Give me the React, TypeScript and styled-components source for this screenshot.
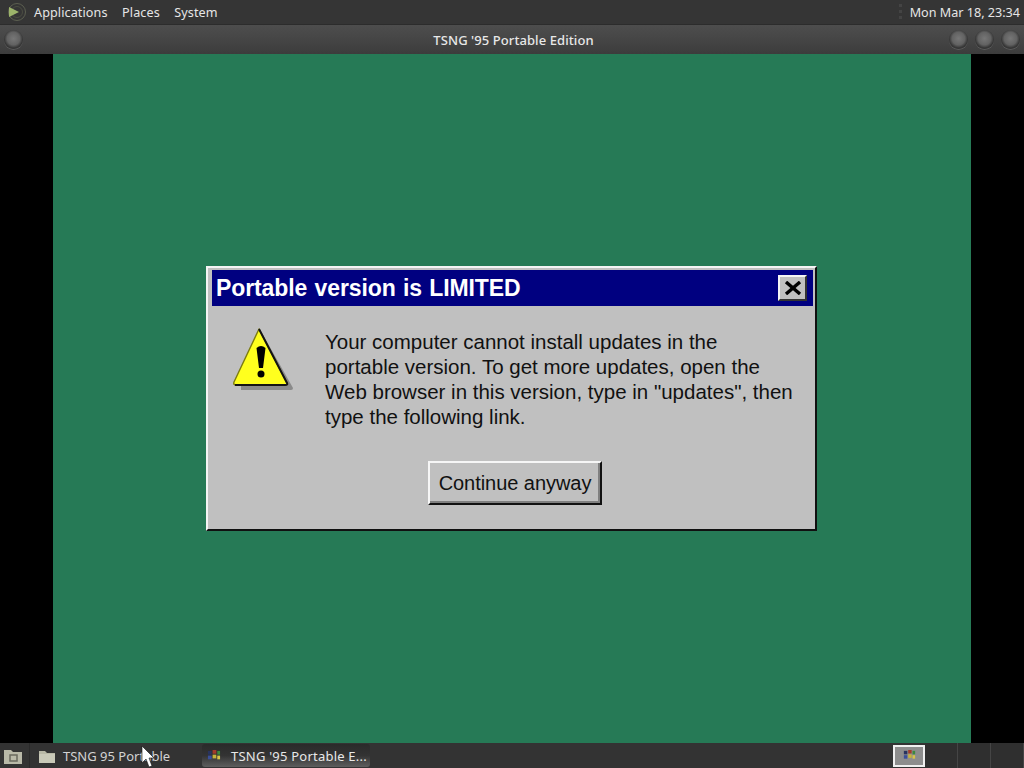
import { createGlobalStyle } from "styled-components";
import styled from "styled-components";

const GlobalStyle = createGlobalStyle`
  html, body {
    margin: 0;
    padding: 0;
    background: #000;
  }
  body {
    font-family: "Noto Sans", "Liberation Sans", sans-serif;
  }
`;

const Screen = styled.div`
  position: relative;
  width: 1024px;
  height: 768px;
  display: flex;
  flex-direction: column;
  overflow: hidden;
`;

const TopPanel = styled.div`
  height: 24px;
  display: flex;
  align-items: center;
  background: #353535;
  color: #e6e6e6;
  font-size: 12.6px;
  padding: 0 4px 0 7px;
`;

const MenuBar = styled.div`
  display: flex;
  gap: 14.5px;
  margin-left: 7px;
  letter-spacing: 0.1px;
`;

const Clock = styled.div`
  letter-spacing: 0;
`;

const Grip = styled.div`
  width: 3px;
  height: 16px;
  margin-right: 8px;
  margin-left: auto;
  background: repeating-linear-gradient(#444 0 3px, transparent 3px 6px);
`;

const TitleBar = styled.div`
  height: 30px;
  display: flex;
  align-items: center;
  padding: 0 4px 0 4px;
  color: #e8e8e8;
  font-size: 13px;
  font-weight: 500;
  background: linear-gradient(#4d4d4d 0, #474747 40%, #3c3c3c 100%);
  border-top: 1px solid #2c2c2c;
  box-sizing: border-box;
`;

const TitleText = styled.div`
  flex: 1;
  text-align: center;
  padding-left: 55px;
  letter-spacing: 0.08px;
`;

const WindowButtons = styled.div`
  display: flex;
  gap: 7px;
`;

const RoundButton = styled.div`
  width: 19px;
  height: 19px;
  border-radius: 50%;
  box-sizing: border-box;
  background: radial-gradient(circle at 50% 45%, #777 0, #626262 45%, #383838 65%, #2b2b2b 100%);
  box-shadow: 0 1px 0 #5a5a5a;
`;

const Desktop = styled.div`
  flex: 1;
  display: flex;
  background: #000;
  padding: 0 53px;
`;

const Stage = styled.div`
  flex: 1;
  display: flex;
  align-items: center;
  justify-content: center;
  background: #267a56;
  padding-right: 1px;
`;

const Dialog = styled.div`
  width: 611px;
  height: 265px;
  box-sizing: border-box;
  background: #c0c0c0;
  border: 2px solid;
  border-color: #f4f4f4 #101010 #101010 #f4f4f4;
  padding: 2px 2px 0 4px;
  display: flex;
  flex-direction: column;
  font-family: "Liberation Sans", Arial, sans-serif;
`;

const DialogTitle = styled.div`
  height: 36px;
  flex: none;
  display: flex;
  align-items: center;
  justify-content: space-between;
  background: #000080;
  padding: 0 6px 0 4px;
  color: #fff;
  font-size: 23px;
  font-weight: 700;
  letter-spacing: -0.1px;
  word-spacing: 1px;
`;

const CloseButton = styled.div`
  width: 29px;
  height: 26px;
  box-sizing: border-box;
  display: flex;
  align-items: center;
  justify-content: center;
  background: #c0c0c0;
  border: 2px solid;
  border-color: #f4f4f4 #333 #333 #f4f4f4;
`;

const DialogBody = styled.div`
  flex: 1;
  display: flex;
  padding: 22px 12px 0 21px;
`;

const WarningIcon = styled.div`
  width: 60px;
  height: 62px;
  flex: none;
  margin-right: 32px;
`;

const Message = styled.div`
  color: #111;
  font-size: 20.5px;
  line-height: 25px;
  white-space: pre;
  padding-top: 1px;
  letter-spacing: 0;
`;

const ButtonRow = styled.div`
  height: 68px;
  flex: none;
  display: flex;
  justify-content: center;
  padding-left: 5px;
`;

const ContinueButton = styled.div`
  width: 174px;
  height: 44px;
  box-sizing: border-box;
  display: flex;
  align-items: center;
  justify-content: center;
  background: #c0c0c0;
  border: 2px solid;
  border-color: #f6f6f6 #111 #111 #f6f6f6;
  box-shadow: inset -2px -2px 0 #808080;
  color: #111;
  font-size: 20px;
  letter-spacing: -0.05px;
`;

const BottomPanel = styled.div`
  height: 25px;
  display: flex;
  align-items: center;
  background: #333;
  color: #dcdcdc;
  font-size: 13px;
`;

const ShowDesktop = styled.div`
  width: 30px;
  height: 25px;
  flex: none;
  display: flex;
  align-items: center;
  padding-left: 3px;
  box-sizing: border-box;
  border-right: 1px solid #2a2a2a;
`;

const Task = styled.div<{ $active?: boolean }>`
  height: 23px;
  width: ${(p) => (p.$active ? "168px" : "172px")};
  box-sizing: border-box;
  display: flex;
  align-items: center;
  gap: ${(p) => (p.$active ? "10px" : "7px")};
  padding-left: ${(p) => (p.$active ? "5px" : "8px")};
  border-radius: 3px;
  letter-spacing: ${(p) => (p.$active ? "0.22px" : "0")};
  color: ${(p) => (p.$active ? "#e8e8e8" : "#d4d4d4")};
  background: ${(p) =>
    p.$active ? "linear-gradient(#2a2a2a 0, #333 50%, #5e5e5e 100%)" : "transparent"};
`;

const Tray = styled.div`
  margin-left: auto;
  display: flex;
  height: 25px;
  align-items: center;
`;

const TrayThumb = styled.div`
  width: 32px;
  height: 22px;
  box-sizing: border-box;
  border: 2px solid #f0f0f0;
  background: #8d8d8d;
  display: flex;
  align-items: center;
  justify-content: center;
`;

const Workspace = styled.div`
  width: 33px;
  height: 25px;
  border-right: 1px solid #454545;
  box-sizing: border-box;
  background: #2f2f2f;
`;

const Pointer = styled.svg`
  position: absolute;
  left: 141px;
  top: 746px;
`;

function FolderIcon() {
  return (
    <svg width="18" height="16" viewBox="0 0 18 16">
      <path d="M1 3 h6 l2 2 h8 v10 H1 Z" fill="#b8b8a6" />
      <rect x="1" y="6" width="16" height="9" fill="#c9c9b8" />
    </svg>
  );
}

function Win95Logo({ size = 14 }: { size?: number }) {
  return (
    <svg width={size} height={size * 0.8} viewBox="0 0 15 12">
      <rect x="1" y="1" width="4" height="4" fill="#28335f" />
      <rect x="6" y="0" width="4" height="4" fill="#a33a2a" />
      <rect x="11" y="1" width="3" height="4" fill="#3d8a3d" />
      <rect x="1" y="6" width="4" height="4" fill="#3a4f9a" />
      <rect x="6" y="5" width="4" height="4" fill="#c7b13a" />
      <rect x="11" y="6" width="3" height="4" fill="#d8c44a" />
    </svg>
  );
}

function App() {
  return (
    <Screen>
      <GlobalStyle />
      <TopPanel>
        <svg width="20" height="20" viewBox="0 0 20 20">
          <circle cx="10" cy="10" r="8.5" fill="none" stroke="#5c5f50" strokeWidth="1" />
          <circle cx="10" cy="10" r="5.5" fill="none" stroke="#4b4d42" strokeWidth="1" />
          <path d="M2 5 L12 10 L2 15 Z" fill="#9cb36a" />
        </svg>
        <MenuBar>
          <span>Applications</span>
          <span>Places</span>
          <span>System</span>
        </MenuBar>
        <Grip />
        <Clock>Mon Mar 18, 23:34</Clock>
      </TopPanel>
      <TitleBar>
        <RoundButton />
        <TitleText>TSNG '95 Portable Edition</TitleText>
        <WindowButtons>
          <RoundButton />
          <RoundButton />
          <RoundButton />
        </WindowButtons>
      </TitleBar>
      <Desktop>
        <Stage>
          <Dialog>
            <DialogTitle>
              <span>Portable version is LIMITED</span>
              <CloseButton>
                <svg width="18" height="14" viewBox="0 0 18 14">
                  <path d="M2 1 L16 13 M16 1 L2 13" stroke="#000" strokeWidth="3.4" />
                </svg>
              </CloseButton>
            </DialogTitle>
            <DialogBody>
              <WarningIcon>
                <svg width="60" height="62" viewBox="0 0 60 62">
                  <path d="M29 5 L60 60 Q60 62 58 62 H8 L8 58 Z" fill="#8a8a8a" />
                  <path
                    d="M26 1 L54 55 Q55 57 52 57 H3 Q0 57 1 54 Z"
                    fill="#ffff1e"
                    stroke="#7c7c10"
                    strokeWidth="1.4"
                    strokeLinejoin="round"
                  />
                  <path d="M26 1 L54 55 Q55 57 52 57 H2" fill="none" stroke="#141414" strokeWidth="2" />
                  <path d="M23.5 20 Q28 16 32.5 20 L30 40 H26 Z" fill="#000" />
                  <circle cx="28" cy="46" r="3.5" fill="#000" />
                </svg>
              </WarningIcon>
              <Message>
                {`Your computer cannot install updates in the
portable version. To get more updates, open the
Web browser in this version, type in "updates", then
type the following link.`}
              </Message>
            </DialogBody>
            <ButtonRow>
              <ContinueButton>Continue anyway</ContinueButton>
            </ButtonRow>
          </Dialog>
        </Stage>
      </Desktop>
      <BottomPanel>
        <ShowDesktop>
          <svg width="20" height="18" viewBox="0 0 20 18">
            <path d="M1 3 h7 l2 2 h9 v12 H1 Z" fill="#b9b9a8" />
            <rect x="7" y="8" width="7" height="6" fill="none" stroke="#6a6a5e" strokeWidth="1.5" />
          </svg>
        </ShowDesktop>
        <Task>
          <FolderIcon />
          <span>TSNG 95 Portable</span>
        </Task>
        <Task $active>
          <Win95Logo />
          <span>TSNG '95 Portable E...</span>
        </Task>
        <Tray>
          <TrayThumb>
            <Win95Logo size={13} />
          </TrayThumb>
          <Workspace />
          <Workspace />
          <Workspace />
        </Tray>
      </BottomPanel>
      <Pointer width="14" height="22" viewBox="0 0 14 22">
        <path d="M1 0 L1 17 L5 13 L8 21 L11 20 L8 12 L13 12 Z" fill="#fff" stroke="#111" strokeWidth="0.6" />
      </Pointer>
    </Screen>
  );
}

export default App;
